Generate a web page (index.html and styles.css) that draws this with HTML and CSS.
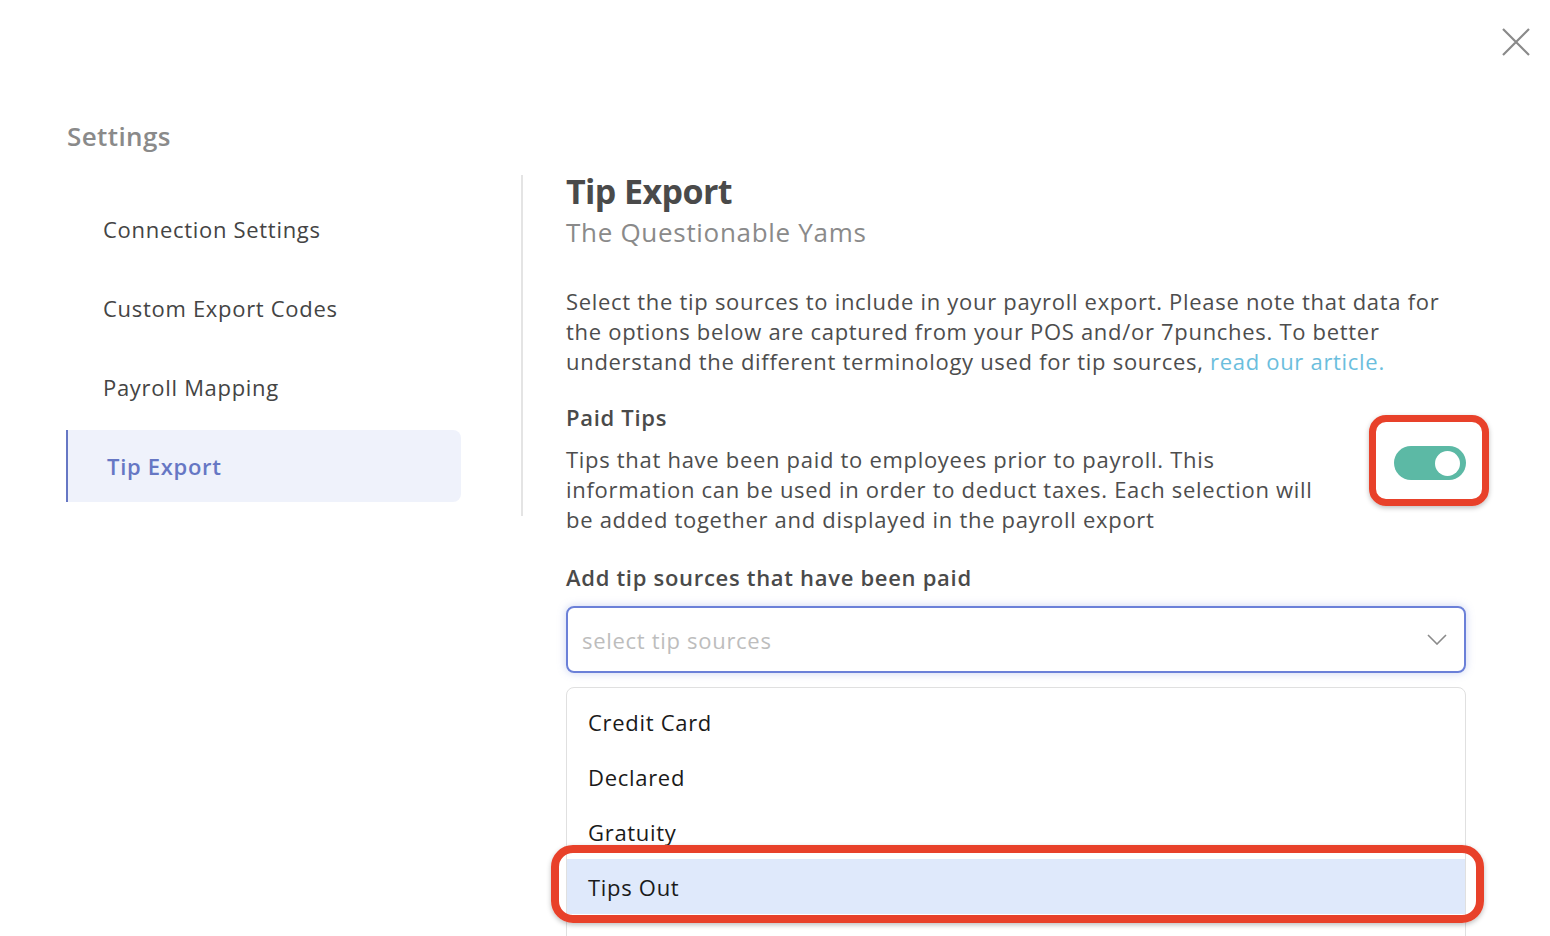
FILE: index.html
```html
<!DOCTYPE html>
<html>
  <head>
    <title>Settings - Tip Export</title>
    <link rel="stylesheet" href="styles.css">
    <meta name="viewport" content="width=device-width, initial-scale=1.0" />
  </head>
  <body>
    <div class="modal">
      <div class="top-bar">
        <button class="close-btn" aria-label="Close">
          <svg width="30" height="30" viewBox="0 0 30 30">
            <path d="M2 2 L28 28 M28 2 L2 28" stroke="#8a8a8a" stroke-width="2.2" fill="none" />
          </svg>
        </button>
      </div>
      <h2 class="settings-title">Settings</h2>
      <div class="layout">
        <nav class="sidebar">
          <a class="nav-item">Connection Settings</a>
          <a class="nav-item">Custom Export Codes</a>
          <a class="nav-item">Payroll Mapping</a>
          <a class="nav-item active">Tip Export</a>
        </nav>
        <main class="content">
          <h1 class="page-title">Tip Export</h1>
          <div class="page-subtitle">The Questionable Yams</div>
          <p class="intro">
            Select the tip sources to include in your payroll export. Please note that data for<br>
            the options below are captured from your POS and/or 7punches. To better<br>
            understand the different terminology used for tip sources, <a class="link">read our article.</a>
          </p>
          <h3 class="section-title">Paid Tips</h3>
          <div class="setting-row">
            <p class="setting-desc">
              Tips that have been paid to employees prior to payroll. This<br>
              information can be used in order to deduct taxes. Each selection will<br>
              be added together and displayed in the payroll export
            </p>
            <div class="toggle-wrap">
              <div class="toggle on"><span class="knob"></span></div>
              <span class="highlight highlight-toggle"></span>
            </div>
          </div>
          <h3 class="field-label">Add tip sources that have been paid</h3>
          <div class="select">
            <span class="placeholder">select tip sources</span>
            <svg class="chevron" width="20" height="11" viewBox="0 0 20 11">
              <path d="M1 1 L10 10 L19 1" stroke="#8a8a8a" stroke-width="1.6" fill="none" />
            </svg>
          </div>
          <ul class="dropdown">
            <li class="option">Credit Card</li>
            <li class="option">Declared</li>
            <li class="option">Gratuity</li>
            <li class="option selected">Tips Out<span class="highlight highlight-option"></span></li>
          </ul>
        </main>
      </div>
    </div>
  </body>
</html>
```

FILE: styles.css
```css
body {
  margin: 0;
  font-family: "Open Sans", "Lato", sans-serif;
  letter-spacing: 0.7px;
  color: #4a4a4a;
  background: #ffffff;
  overflow: hidden;
}
.modal {
  height: 936px;
  padding-left: 66px;
  position: relative;
}
.top-bar {
  display: flex;
  justify-content: flex-end;
  padding: 27px 19px 0 0;
  height: 94px;
  box-sizing: border-box;
}
.close-btn {
  border: none;
  background: none;
  padding: 0;
  width: 30px;
  height: 30px;
  cursor: pointer;
}
.settings-title {
  margin: 26px 0 0 1px;
  font-size: 26px;
  line-height: 32px;
  font-weight: 600;
  letter-spacing: 0.4px;
  color: #8a8a8a;
}
.layout {
  display: flex;
  align-items: flex-start;
  margin-top: 23px;
}
.sidebar {
  width: 395px;
  padding: 18px 60px 14px 0;
  border-right: 2px solid #e4e4e4;
  display: flex;
  flex-direction: column;
  gap: 7px;
}
.nav-item {
  height: 72px;
  display: flex;
  align-items: center;
  padding-left: 37px;
  font-size: 22px;
  color: #444444;
  border-radius: 0 8px 8px 0;
}
.nav-item.active {
  background: #eff2fb;
  border-left: 2px solid #6677c4;
  padding-left: 39px;
  color: #6677c4;
  font-weight: 600;
}
.content {
  margin-left: 43px;
  width: 900px;
}
.page-title {
  margin: -2px 0 0;
  font-size: 34px;
  line-height: 36px;
  font-weight: 700;
  letter-spacing: -0.6px;
  color: #4a4a4a;
}
.page-subtitle {
  margin-top: 6px;
  font-size: 26px;
  line-height: 34px;
  color: #8a8a8a;
}
.intro {
  margin: 37px 0 0;
  font-size: 22px;
  line-height: 30px;
  color: #4d4d4d;
  white-space: nowrap;
}
.link {
  color: #6bbedd;
  cursor: pointer;
}
.section-title,
.field-label {
  margin: 26px 0 0;
  font-size: 22px;
  line-height: 30px;
  font-weight: 600;
  color: #4a4a4a;
}
.field-label {
  margin-top: 28px;
}
.setting-row {
  display: flex;
  justify-content: space-between;
  align-items: flex-start;
  margin-top: 12px;
}
.setting-desc {
  margin: 0;
  font-size: 22px;
  line-height: 30px;
  color: #4d4d4d;
  white-space: nowrap;
}
.toggle-wrap {
  position: relative;
  margin-top: 2px;
}
.toggle {
  width: 72px;
  height: 34px;
  border-radius: 17px;
  background: #5cb9a5;
  display: flex;
  align-items: center;
  justify-content: flex-end;
  padding: 0 6px;
  box-sizing: border-box;
}
.knob {
  width: 25px;
  height: 25px;
  border-radius: 50%;
  background: #ffffff;
}
.highlight {
  position: absolute;
  border: 7px solid #e8412a;
  box-shadow: 0 2px 5px rgba(0, 0, 0, 0.25);
  pointer-events: none;
}
.highlight-toggle {
  left: -25px;
  right: -23px;
  top: -31px;
  bottom: -26px;
  border-radius: 17px;
}
.select {
  margin-top: 14px;
  height: 67px;
  box-sizing: border-box;
  border: 2px solid #6b80d8;
  border-radius: 8px;
  box-shadow: 0 0 8px rgba(107, 128, 216, 0.35);
  display: flex;
  align-items: center;
  justify-content: space-between;
  padding: 0 17px 0 14px;
}
.placeholder {
  font-size: 22px;
  color: #bdbdbd;
}
.dropdown {
  list-style: none;
  margin: 14px 0 0;
  padding: 6px 0 0;
  border: 1px solid #e0e0e0;
  border-radius: 8px;
  height: 260px;
}
.option {
  height: 55px;
  display: flex;
  align-items: center;
  padding-left: 21px;
  font-size: 22px;
  color: #1a1a1a;
  position: relative;
}
.option.selected {
  background: #dfe9fb;
}
.highlight-option {
  left: -16px;
  right: -19px;
  top: -14px;
  bottom: -9px;
  border-width: 8px;
  border-radius: 22px;
}
```
